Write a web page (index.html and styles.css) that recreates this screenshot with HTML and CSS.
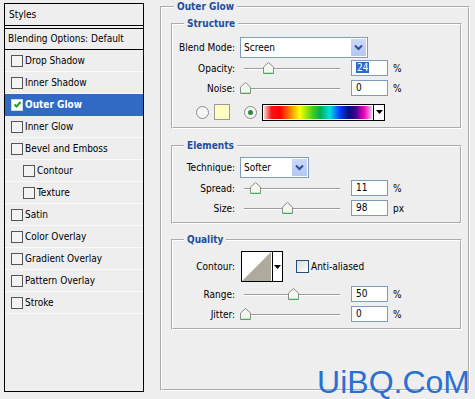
FILE: index.html
```html
<!DOCTYPE html>
<html>
<head>
<meta charset="utf-8">
<link rel="stylesheet" href="styles.css">
</head>
<body>
<div class="page">
  <div class="styles-panel">
    <div class="sp-header">Styles</div>
    <div class="sp-blend">Blending Options: Default</div>
    <ul class="sp-list">
      <li class="sp-item"><span class="cb"></span>Drop Shadow</li>
      <li class="sp-item"><span class="cb"></span>Inner Shadow</li>
      <li class="sp-item active"><span class="cb checked"><svg width="9" height="9" viewBox="0 0 9 9"><path d="M1.5 4.5 L3.5 6.5 L7.5 2" fill="none" stroke="#22a022" stroke-width="2"/></svg></span>Outer Glow</li>
      <li class="sp-item"><span class="cb"></span>Inner Glow</li>
      <li class="sp-item"><span class="cb"></span>Bevel and Emboss</li>
      <li class="sp-item sub"><span class="cb"></span>Contour</li>
      <li class="sp-item sub"><span class="cb"></span>Texture</li>
      <li class="sp-item"><span class="cb"></span>Satin</li>
      <li class="sp-item"><span class="cb"></span>Color Overlay</li>
      <li class="sp-item"><span class="cb"></span>Gradient Overlay</li>
      <li class="sp-item"><span class="cb"></span>Pattern Overlay</li>
      <li class="sp-item"><span class="cb"></span>Stroke</li>
    </ul>
  </div>

  <fieldset class="group outer">
    <legend class="title outer-title">Outer Glow</legend>

    <fieldset class="group inner structure">
      <legend class="title inner-title">Structure</legend>
      <div class="row blend-row">
        <span class="lbl">Blend Mode:</span>
        <div class="select select-wide"><span class="val">Screen</span><span class="sel-btn"><svg width="9" height="7" viewBox="0 0 9 7"><path d="M1 1.5 L4.5 5 L8 1.5" fill="none" stroke="#2c4f9a" stroke-width="2"/></svg></span></div>
      </div>
      <div class="row">
        <span class="lbl">Opacity:</span>
        <div class="slider"><span class="track"></span><span class="thumb" style="left:23px"><svg width="11" height="12" viewBox="0 0 11 12"><path d="M0.5 11.5 V5 L5.5 0.5 L10.5 5 V11.5 Z" fill="#f4f5ee" stroke="#8d8d88"/><path d="M1 11.5 H10" stroke="#3fae5a" stroke-width="1.5"/></svg></span></div>
        <div class="num"><span class="sel">24</span></div>
        <span class="unit">%</span>
      </div>
      <div class="row">
        <span class="lbl">Noise:</span>
        <div class="slider"><span class="track"></span><span class="thumb" style="left:0px"><svg width="11" height="12" viewBox="0 0 11 12"><path d="M0.5 11.5 V5 L5.5 0.5 L10.5 5 V11.5 Z" fill="#f4f5ee" stroke="#8d8d88"/><path d="M1 11.5 H10" stroke="#3fae5a" stroke-width="1.5"/></svg></span></div>
        <div class="num">0</div>
        <span class="unit">%</span>
      </div>
      <div class="color-row">
        <span class="radio"></span>
        <span class="swatch"></span>
        <span class="radio on"><span class="dot"></span></span>
        <div class="grad-picker"><span class="grad"></span><span class="grad-btn"><svg width="7" height="4" viewBox="0 0 7 4"><path d="M0 0 H7 L3.5 4 Z" fill="#000"/></svg></span></div>
      </div>
    </fieldset>

    <fieldset class="group inner elements">
      <legend class="title inner-title">Elements</legend>
      <div class="row tech-row">
        <span class="lbl">Technique:</span>
        <div class="select select-narrow"><span class="val">Softer</span><span class="sel-btn"><svg width="9" height="7" viewBox="0 0 9 7"><path d="M1 1.5 L4.5 5 L8 1.5" fill="none" stroke="#2c4f9a" stroke-width="2"/></svg></span></div>
      </div>
      <div class="row">
        <span class="lbl">Spread:</span>
        <div class="slider"><span class="track"></span><span class="thumb" style="left:10px"><svg width="11" height="12" viewBox="0 0 11 12"><path d="M0.5 11.5 V5 L5.5 0.5 L10.5 5 V11.5 Z" fill="#f4f5ee" stroke="#8d8d88"/><path d="M1 11.5 H10" stroke="#3fae5a" stroke-width="1.5"/></svg></span></div>
        <div class="num">11</div>
        <span class="unit">%</span>
      </div>
      <div class="row">
        <span class="lbl">Size:</span>
        <div class="slider"><span class="track"></span><span class="thumb" style="left:42px"><svg width="11" height="12" viewBox="0 0 11 12"><path d="M0.5 11.5 V5 L5.5 0.5 L10.5 5 V11.5 Z" fill="#f4f5ee" stroke="#8d8d88"/><path d="M1 11.5 H10" stroke="#3fae5a" stroke-width="1.5"/></svg></span></div>
        <div class="num">98</div>
        <span class="unit">px</span>
      </div>
    </fieldset>

    <fieldset class="group inner quality">
      <legend class="title inner-title">Quality</legend>
      <div class="row contour-row">
        <span class="lbl">Contour:</span>
        <div class="contour-line">
          <div class="contour"><span class="preview"><svg width="29" height="29" viewBox="0 0 29 29"><path d="M0 29 L29 0 V29 Z" fill="#aeaa9e"/></svg></span><span class="contour-btn"><svg width="7" height="4" viewBox="0 0 7 4"><path d="M0 0 H7 L3.5 4 Z" fill="#000"/></svg></span></div>
          <span class="xcb"></span><span class="xcb-label">Anti-aliased</span>
        </div>
      </div>
      <div class="row range-row">
        <span class="lbl">Range:</span>
        <div class="slider"><span class="track"></span><span class="thumb" style="left:48px"><svg width="11" height="12" viewBox="0 0 11 12"><path d="M0.5 11.5 V5 L5.5 0.5 L10.5 5 V11.5 Z" fill="#f4f5ee" stroke="#8d8d88"/><path d="M1 11.5 H10" stroke="#3fae5a" stroke-width="1.5"/></svg></span></div>
        <div class="num">50</div>
        <span class="unit">%</span>
      </div>
      <div class="row">
        <span class="lbl">Jitter:</span>
        <div class="slider"><span class="track"></span><span class="thumb" style="left:0px"><svg width="11" height="12" viewBox="0 0 11 12"><path d="M0.5 11.5 V5 L5.5 0.5 L10.5 5 V11.5 Z" fill="#f4f5ee" stroke="#8d8d88"/><path d="M1 11.5 H10" stroke="#3fae5a" stroke-width="1.5"/></svg></span></div>
        <div class="num">0</div>
        <span class="unit">%</span>
      </div>
    </fieldset>
  </fieldset>

  <div class="watermark">UiBQ.CoM</div>
</div>
</body>
</html>
```
FILE: styles.css
```css
* { box-sizing: border-box; }
html, body { margin: 0; padding: 0; }
body {
  background: #eeeeee;
  font-family: "DejaVu Sans Condensed", "DejaVu Sans", Tahoma, sans-serif;
  font-size: 10px;
  color: #000;
  width: 475px;
  height: 399px;
  overflow: hidden;
}
.page {
  position: relative;
  display: flex;
  align-items: flex-start;
  padding-left: 4px;
  height: 399px;
}

/* ---------- left styles list ---------- */
.styles-panel {
  margin-top: 3px;
  width: 140px;
  height: 389px;
  border: 1px solid #000;
  background: #eeeeee;
}
.sp-header {
  height: 25px;
  line-height: 21px;
  padding-left: 4px;
  border-bottom: 4px double #000;
}
.sp-blend {
  height: 21px;
  line-height: 20px;
  padding-left: 3px;
  border-bottom: 1px solid #000;
}
.sp-list { list-style: none; margin: 0; padding: 0; }
.sp-item {
  display: flex;
  align-items: center;
  height: 22px;
  padding-left: 6px;
  border-bottom: 1px solid #fafafa;
}
.sp-item.sub { padding-left: 18px; }
.cb {
  width: 12px;
  height: 12px;
  margin-right: 2px;
  border: 1px solid #555;
  background: #f3f3f3;
  display: flex;
  align-items: center;
  justify-content: center;
}
.sp-item.active {
  background: #316ac5;
  color: #fff;
  font-weight: bold;
  border-bottom-color: #316ac5;
}
.cb.checked { background: #fff; border-color: #c8d4ec; }

/* ---------- groups ---------- */
.group {
  margin: 0;
  min-width: 0;
  border: 2px groove #ffffff;
}
.outer {
  margin-left: 16px;
  margin-top: 1px;
  width: 310px;
  height: 390px;
  padding: 0 6px 0 9px;
}
.title {
  color: #1d4e9f;
  font-weight: bold;
  padding: 0 3px;
}
.outer-title { margin-left: 3px; line-height: 12px; }
.inner {
  padding: 0;
  width: 291px;
}
.inner-title { margin-left: 11px; line-height: 14px; }
.structure { margin-top: 4px; padding: 5px 0 3px; }
.elements { margin-top: 10px; padding: 3px 0 4px; }
.quality { margin-top: 9px; padding: 2px 0 4px; }

.row {
  display: grid;
  grid-template-columns: 62px 106px 37px auto;
  column-gap: 5px;
  align-items: center;
  height: 20px;
}
.lbl { text-align: right; white-space: nowrap; }
.blend-row, .tech-row { height: 22px; }
.contour-row { height: 35px; }

.select {
  display: flex;
  height: 21px;
  border: 1px solid #7f9db9;
  background: #fff;
  grid-column: 2 / span 3;
  justify-self: start;
}
.select-wide { width: 128px; }
.select-narrow { width: 69px; }
.select .val { flex: 1; padding-left: 3px; line-height: 19px; }
.sel-btn {
  width: 15px;
  margin: 1px;
  background: linear-gradient(#cbd8f8, #b4c7f2);
  display: flex;
  align-items: center;
  justify-content: center;
}

.slider { position: relative; height: 20px; }
.track {
  position: absolute;
  left: 4px;
  width: 96px;
  top: 10px;
  height: 2px;
  border-top: 1px solid #9c9c9c;
  border-bottom: 1px solid #ffffff;
}
.thumb { position: absolute; top: 4px; width: 11px; height: 12px; display: block; }
.thumb svg { display: block; }

.num {
  height: 16px;
  border: 1px solid #7f9db9;
  background: #fff;
  padding-left: 4px;
  line-height: 14px;
}
.num .sel { background: #316ac5; color: #fff; padding: 0 1px; }
.unit { white-space: nowrap; }

.color-row {
  display: flex;
  align-items: center;
  height: 24px;
  margin-top: 2px;
  padding-left: 23px;
}
.radio {
  width: 13px;
  height: 13px;
  border-radius: 50%;
  border: 1px solid #8a8a8a;
  background: #f7f7f7;
  display: flex;
  align-items: center;
  justify-content: center;
}
.radio .dot { width: 5px; height: 5px; border-radius: 50%; background: #2c8a3a; }
.swatch {
  width: 16px;
  height: 16px;
  margin-left: 5px;
  margin-right: 14px;
  border: 1px solid #9a9a9a;
  background: #ffffc0;
}
.grad-picker {
  display: flex;
  margin-left: 5px;
  height: 17px;
  border: 1px solid #000;
}
.grad {
  width: 110px;
  border: 1px solid #fff;
  background: linear-gradient(90deg, #ffd0d0 0%, #ff1010 7%, #ff0000 15%, #ff8000 24%, #ffff00 33%, #40d020 45%, #00b050 52%, #00e0e0 61%, #0040ff 70%, #001080 78%, #400090 85%, #ff00c0 93%, #ffc0f0 100%);
}
.grad-btn {
  width: 11px;
  border-left: 1px solid #000;
  background: #fff;
  display: flex;
  align-items: center;
  justify-content: center;
}

.contour-line {
  grid-column: 2 / span 3;
  display: flex;
  align-items: center;
}
.contour {
  display: flex;
  margin-left: 1px;
  height: 31px;
  border: 1px solid #000;
  background: #fff;
}
.preview { width: 30px; display: block; }
.preview svg { display: block; }
.contour-btn {
  width: 10px;
  border-left: 1px solid #000;
  display: flex;
  align-items: center;
  justify-content: center;
}
.xcb {
  width: 13px;
  height: 13px;
  margin-left: 13px;
  border: 1px solid #1c5180;
  background: linear-gradient(135deg, #dcdcd7, #ffffff);
}
.xcb-label { margin-left: 2px; }

.watermark {
  position: absolute;
  right: 5px;
  top: 366px;
  font-family: "Liberation Sans", Arial, sans-serif;
  font-size: 32px;
  line-height: 33px;
  color: #2a70d2;
  white-space: nowrap;
}
```
